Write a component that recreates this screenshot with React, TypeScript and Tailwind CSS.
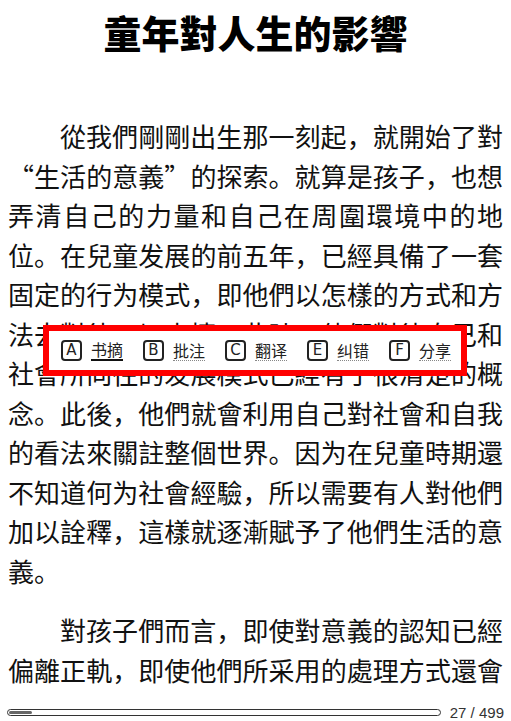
import React from 'react';

// 阅读页 - 正文 + 划词操作浮层 + 底部进度条
const paragraphs: string[][] = [
    [
        '從我們剛剛出生那一刻起，就開始了對',
        '“生活的意義”的探索。就算是孩子，也想',
        '弄清自己的力量和自己在周圍環境中的地',
        '位。在兒童发展的前五年，已經具備了一套',
        '固定的行为模式，即他們以怎樣的方式和方',
        '法去對待一切事情。此時，他們對待自己和',
        '社會所向往的发展模式已經有了很清楚的概',
        '念。此後，他們就會利用自己對社會和自我',
        '的看法來關註整個世界。因为在兒童時期還',
        '不知道何为社會經驗，所以需要有人對他們',
        '加以詮釋，這樣就逐漸賦予了他們生活的意',
        '義。',
    ],
    [
        '對孩子們而言，即使對意義的認知已經',
        '偏離正軌，即使他們所采用的處理方式還會',
    ],
];

const actions = [
    { key: 'A', label: '书摘', active: true },
    { key: 'B', label: '批注' },
    { key: 'C', label: '翻译' },
    { key: 'E', label: '纠错' },
    { key: 'F', label: '分享' },
];

const page = 27;
const total = 499;

export default function App() {
    return (
        <div className="h-[721px] w-full overflow-hidden bg-white flex flex-col text-[#111] font-['Noto_Sans_CJK_SC','Noto_Sans_CJK_TC',sans-serif]">
            <div className="relative flex-1 overflow-hidden px-[8px]">
                <h1 className="text-center text-[38px] leading-[64px] font-black text-black">童年對人生的影響</h1>

                <div className="mt-[52px] text-[26px] leading-[39.5px]">
                    {paragraphs.map((lines, pi) => (
                        <div key={pi} className={pi > 0 ? 'mt-[20px]' : ''}>
                            {lines.map((line, li) => {
                                const last = li === lines.length - 1 && pi === 0;
                                return (
                                    <div
                                        key={li}
                                        className={
                                            'whitespace-nowrap ' +
                                            (li === 0 ? 'indent-[2em] ' : '') +
                                            (last ? 'text-left' : 'text-justify [text-align-last:justify]')
                                        }
                                    >
                                        {line}
                                    </div>
                                );
                            })}
                        </div>
                    ))}
                </div>

                {/* 选中文字后的操作浮层 */}
                <div className="absolute left-[43px] top-[325px] w-[424px] h-[51px] border-[6px] border-[#ff0000] bg-white flex items-center pl-[12px] gap-[20px]">
                    {actions.map((a) => (
                        <div key={a.key} className="flex items-center gap-[9px]">
                            <span className="w-[21px] h-[21px] rounded-[4px] border-2 border-[#222] flex items-center justify-center text-[15px] leading-none text-[#222] font-['DejaVu_Sans',sans-serif]">
                                {a.key}
                            </span>
                            <span
                                className={
                                    'text-[16px] leading-[19px] text-[#222] ' +
                                    (a.active ? 'border-b-[2.5px] border-[#111]' : 'border-b border-dotted border-[#888]')
                                }
                            >
                                {a.label}
                            </span>
                        </div>
                    ))}
                </div>
            </div>

            <div className="h-[17px] flex items-center px-[7px] gap-[9px]">
                <div className="flex-1 h-[7px] rounded-full border-[1.5px] border-[#333] p-[1px]">
                    <div className="h-full rounded-full bg-[#666]" style={{ width: `${(page / total) * 100}%` }} />
                </div>
                <span className="text-[15px] leading-none text-[#333] font-['Liberation_Sans',sans-serif]">
                    {page} / {total}
                </span>
            </div>
        </div>
    );
}
